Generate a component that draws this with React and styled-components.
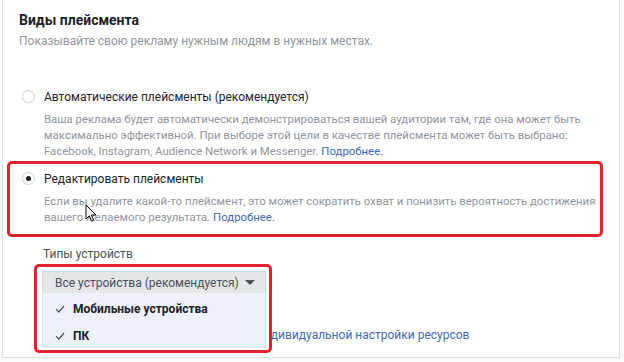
import React from "react";
import styled, { createGlobalStyle } from "styled-components";

const GlobalStyle = createGlobalStyle`
  html, body {
    margin: 0;
    padding: 0;
    background: #fafafa;
    font-family: Roboto, "Liberation Sans", Arial, sans-serif;
  }
`;

const Panel = styled.section`
  position: relative;
  box-sizing: border-box;
  width: 618px;
  height: 358px;
  margin-left: 2px;
  padding: 11px 16px 0 16px;
  background: #ffffff;
  border: 1px solid #dadde1;
  border-top: none;
  overflow: hidden;
`;

const Title = styled.h2`
  margin: 0;
  font-size: 14px;
  line-height: 18px;
  font-weight: 700;
  color: #1d2129;
`;

const Subtitle = styled.p`
  margin: 4px 0 0;
  font-size: 12px;
  line-height: 16px;
  color: #90949c;
`;

const Options = styled.div`
  display: flex;
  flex-direction: column;
  width: 596px;
  margin: 30px 0 0 -12px;
`;

const Option = styled.div`
  display: flex;
  gap: 9px;
  box-sizing: border-box;
  padding: ${(p) => (p.$highlighted ? "7px 12px 9px" : "10px 15px 2px")};
  border: ${(p) => (p.$highlighted ? "3px solid #e0242b" : "none")};
  border-radius: 5px;
`;

const Radio = styled.span`
  flex: none;
  position: relative;
  box-sizing: border-box;
  width: 13px;
  height: 13px;
  margin-top: 1px;
  border-radius: 50%;
  border: 1px solid #ccd0d5;
  background: #fff;

  &::after {
    content: "";
    display: ${(p) => (p.$checked ? "block" : "none")};
    position: absolute;
    left: 3px;
    top: 3px;
    width: 5px;
    height: 5px;
    border-radius: 50%;
    background: #1d2129;
  }
`;

const OptionBody = styled.div`
  display: flex;
  flex-direction: column;
`;

const OptionLabel = styled.div`
  font-size: 12px;
  line-height: 16px;
  color: #1d2129;
`;

const OptionText = styled.div`
  margin-top: 6px;
  font-size: 11.4px;
  line-height: 16px;
  color: #90949c;
  white-space: nowrap;
`;

const Link = styled.a`
  color: #4267b2;
  text-decoration: none;
`;

const Devices = styled.div`
  padding-left: 24px;
  margin-top: 9px;
`;

const FieldLabel = styled.div`
  font-size: 12px;
  line-height: 16px;
  color: #4b4f56;
`;

const DropdownArea = styled.div`
  position: relative;
`;

const HiddenRow = styled.div`
  padding: 65px 0 0 214px;
  font-size: 12px;
  line-height: 16px;
  white-space: nowrap;
`;

const Frame = styled.div`
  position: absolute;
  left: -9px;
  top: 2px;
  padding: 4px 3px 2px 5px;
  background: #fff;
  border: 3px solid #e0242b;
  border-radius: 5px;
`;

const SelectButton = styled.div`
  display: flex;
  align-items: center;
  gap: 6px;
  box-sizing: border-box;
  width: 224px;
  height: 22px;
  padding-left: 12px;
  background: #e4e6ea;
  border: 1px solid #d6d9dd;
  border-bottom: none;
  font-size: 12px;
  color: #4b4f56;
  white-space: nowrap;
`;

const Caret = styled.span`
  width: 0;
  height: 0;
  border-left: 5px solid transparent;
  border-right: 5px solid transparent;
  border-top: 5px solid #4b4f56;
`;

const Menu = styled.ul`
  box-sizing: border-box;
  width: 224px;
  height: 55px;
  margin: 0;
  padding: 2px 0 0;
  list-style: none;
  background: #ecf1fa;
  border: 1px solid #dfe4ec;
  border-top: none;
`;

const MenuItem = styled.li`
  display: flex;
  align-items: center;
  gap: 8px;
  height: 27px;
  padding-left: 12px;
  font-size: 12px;
  font-weight: 700;
  color: #1d2129;
`;

const Cursor = styled.svg`
  position: absolute;
  left: 82px;
  top: 204px;
`;

const Check = () => (
  <svg width="10" height="8" viewBox="0 0 10 8">
    <path d="M1 4.2 L3.8 7 L9 1" fill="none" stroke="#4b4f56" strokeWidth="1.2" />
  </svg>
);

export default function App() {
  return (
    <>
      <GlobalStyle />
      <Panel>
        <Title>Виды плейсмента</Title>
        <Subtitle>Показывайте свою рекламу нужным людям в нужных местах.</Subtitle>
        <Options>
          <Option>
            <Radio />
            <OptionBody>
              <OptionLabel>Автоматические плейсменты (рекомендуется)</OptionLabel>
              <OptionText>
                Ваша реклама будет автоматически демонстрироваться вашей аудитории там, где она может быть
                <br />
                максимально эффективной. При выборе этой цели в качестве плейсмента может быть выбрано:
                <br />
                Facebook, Instagram, Audience Network и Messenger. <Link>Подробнее.</Link>
              </OptionText>
            </OptionBody>
          </Option>
          <Option $highlighted>
            <Radio $checked />
            <OptionBody>
              <OptionLabel>Редактировать плейсменты</OptionLabel>
              <OptionText>
                Если вы удалите какой-то плейсмент, это может сократить охват и понизить вероятность достижения
                <br />
                вашего желаемого результата. <Link>Подробнее.</Link>
              </OptionText>
            </OptionBody>
          </Option>
        </Options>
        <Devices>
          <FieldLabel>Типы устройств</FieldLabel>
          <DropdownArea>
            <HiddenRow>
              <Link>индивидуальной настройки ресурсов</Link>
            </HiddenRow>
            <Frame>
              <SelectButton>
                Все устройства (рекомендуется) <Caret />
              </SelectButton>
              <Menu>
                <MenuItem>
                  <Check />
                  Мобильные устройства
                </MenuItem>
                <MenuItem>
                  <Check />
                  ПК
                </MenuItem>
              </Menu>
            </Frame>
          </DropdownArea>
        </Devices>
        <Cursor width="12" height="19" viewBox="0 0 12 19">
          <path
            d="M1 1 L1 15 L4.3 11.8 L6.6 17.2 L8.6 16.3 L6.4 11 L11 11 Z"
            fill="#fff"
            stroke="#000"
            strokeWidth="1"
            strokeLinejoin="round"
          />
        </Cursor>
      </Panel>
    </>
  );
}
